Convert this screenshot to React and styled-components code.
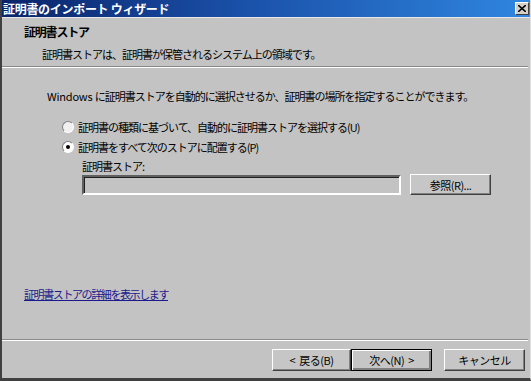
import styled, { createGlobalStyle, css } from 'styled-components'

const Global = createGlobalStyle`
  html, body {
    margin: 0;
    padding: 0;
    background: #c3c3c3;
  }
  * {
    box-sizing: border-box;
  }
`

const Window = styled.div`
  width: 531px;
  height: 381px;
  background: #c3c3c3;
  border-left: 2px solid #404040;
  border-bottom: 3px solid #404040;
  border-right: 1px solid #dedede;
  display: flex;
  flex-direction: column;
  font-family: 'Noto Sans CJK JP', 'Liberation Sans', sans-serif;
  font-size: 11px;
  letter-spacing: -1px;
  color: #000;
  overflow: hidden;
`

const Latin = styled.span`
  letter-spacing: -0.2px;
`

const TitleBar = styled.div`
  height: 18px;
  flex: none;
  background: linear-gradient(90deg, #0a246a 0%, #1a50a8 45%, #2f86e0 100%);
  border-bottom: 1px solid #e8e8e8;
  display: flex;
  align-items: center;
  justify-content: space-between;
  padding: 0 0 0 1px;
`

const Title = styled.span`
  color: #fff;
  font-weight: 700;
  font-size: 12px;
  letter-spacing: -0.3px;
`

const CloseBox = styled.div`
  width: 14px;
  height: 13px;
  background: #d4d0c8;
  border: 1px solid;
  border-color: #fff #404040 #404040 #fff;
  display: flex;
  align-items: center;
  justify-content: center;
  margin-right: 1px;
`

const Header = styled.div`
  height: 48px;
  flex: none;
  padding: 5px 0 0 22px;
  display: flex;
  flex-direction: column;
  gap: 6px;
`

const HeaderTitle = styled.div`
  font-weight: 700;
  font-size: 12px;
  letter-spacing: -1.2px;
`

const HeaderSub = styled.div`
  padding-left: 18px;
`

const Rule = styled.div`
  flex: none;
  height: 2px;
  border-top: 1px solid #8a8a8a;
  border-bottom: 1px solid #ffffff;
  margin: ${({ $m }) => $m || '0'};
`

const Body = styled.div`
  flex: 1;
  display: flex;
  flex-direction: column;
  padding: 20px 0 0 45px;
`

const Intro = styled.div`
  margin-bottom: 15px;
`

const Options = styled.div`
  display: flex;
  flex-direction: column;
  gap: 5px;
  padding-left: 15px;
`

const RadioRow = styled.label`
  display: flex;
  align-items: center;
  gap: 4px;
  height: 15px;
`

const RadioDot = styled.span`
  width: 12px;
  height: 12px;
  border-radius: 50%;
  border: 1px solid;
  border-color: #808080 #ffffff #ffffff #808080;
  background: ${({ $checked }) => ($checked ? '#fff' : '#f0f0f0')};
  position: relative;
  flex: none;
  ${({ $checked }) =>
    $checked &&
    css`
      &::after {
        content: '';
        position: absolute;
        left: 3px;
        top: 3px;
        width: 4px;
        height: 4px;
        border-radius: 50%;
        background: #000;
      }
    `}
`

const StoreBlock = styled.div`
  padding-left: 20px;
  display: flex;
  flex-direction: column;
  margin-top: -1px;
`

const StoreRow = styled.div`
  display: flex;
  align-items: center;
  gap: 9px;
`

const Field = styled.div`
  width: 319px;
  height: 20px;
  background: #c3c3c3;
  border: 2px solid;
  border-color: #606060 #ffffff #ffffff #606060;
  box-shadow: inset 1px 1px 0 #202020;
`

const Button = styled.button`
  font-family: inherit;
  font-size: 11px;
  letter-spacing: -0.5px;
  color: #000;
  background: #c6c6c6;
  height: ${({ $h }) => $h || 21}px;
  width: ${({ $w }) => $w}px;
  padding: 0;
  border: 1px solid;
  border-color: #ffffff #404040 #404040 #ffffff;
  box-shadow: inset -1px -1px 0 #808080;
  ${({ $default }) =>
    $default &&
    css`
      outline: 1px solid #000;
      outline-offset: -1px;
      box-shadow: inset 1px 1px 0 #fff, inset -2px -2px 0 #808080;
    `}
`

const Arrow = styled.span`
  margin: ${({ $side }) => ($side === 'left' ? '0 4px 0 0' : '0 0 0 4px')};
`

const Link = styled.a`
  margin-top: auto;
  margin-bottom: 37px;
  margin-left: -23px;
  color: #1a1a8c;
  text-decoration: underline;
  letter-spacing: -1.4px;
`

const Footer = styled.div`
  flex: none;
  height: 37px;
  display: flex;
  align-items: center;
  padding-left: 270px;
`

const Spacer = styled.div`
  width: ${({ $w }) => $w}px;
`

export default function App() {
  return (
    <>
      <Global />
      <Window>
        <TitleBar>
          <Title>証明書のインポート ウィザード</Title>
          <CloseBox>
            <svg width="8" height="7" viewBox="0 0 8 7">
              <path d="M0 0 L8 7 M8 0 L0 7" stroke="#000" strokeWidth="1.6" />
            </svg>
          </CloseBox>
        </TitleBar>
        <Header>
          <HeaderTitle>証明書ストア</HeaderTitle>
          <HeaderSub>証明書ストアは、証明書が保管されるシステム上の領域です。</HeaderSub>
        </Header>
        <Rule $m="0 2px 0 0" />
        <Body>
          <Intro>
            <Latin>Windows </Latin>に証明書ストアを自動的に選択させるか、証明書の場所を指定することができます。
          </Intro>
          <Options>
            <RadioRow>
              <RadioDot />
              証明書の種類に基づいて、自動的に証明書ストアを選択する(U)
            </RadioRow>
            <RadioRow>
              <RadioDot $checked />
              証明書をすべて次のストアに配置する(P)
            </RadioRow>
            <StoreBlock>
              <span>証明書ストア:</span>
              <StoreRow>
                <Field />
                <Button $w={81} $h={21}>参照(R)...</Button>
              </StoreRow>
            </StoreBlock>
          </Options>
          <Link href="#">証明書ストアの詳細を表示します</Link>
        </Body>
        <Rule $m="0 2px 0 0" />
        <Footer>
          <Button $w={79} $h={22}>
            <Arrow $side="left">&lt;</Arrow>戻る(B)
          </Button>
          <Button $w={81} $h={22} $default>
            次へ(N)<Arrow $side="right">&gt;</Arrow>
          </Button>
          <Spacer $w={12} />
          <Button $w={81} $h={22}>キャンセル</Button>
        </Footer>
      </Window>
    </>
  )
}
